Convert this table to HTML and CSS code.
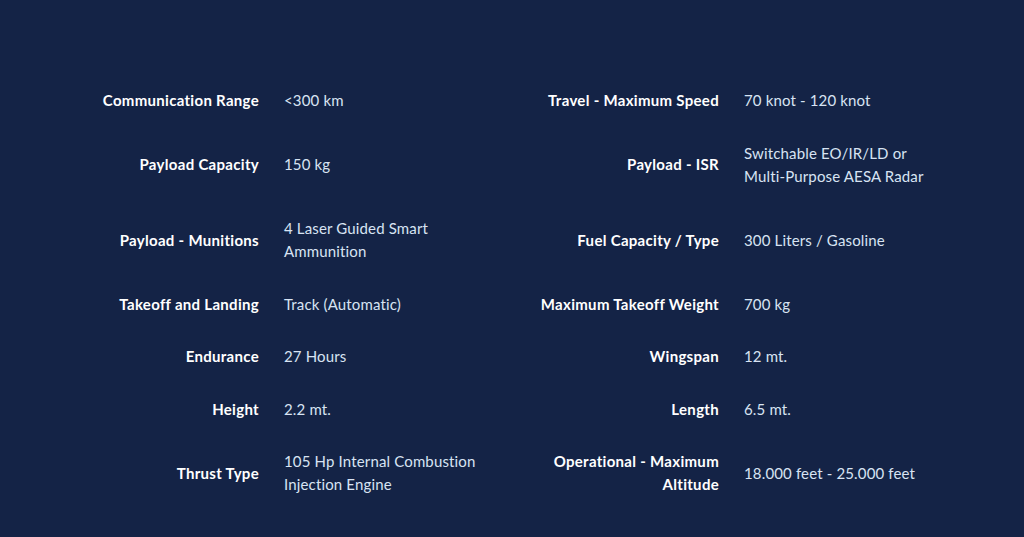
FILE: index.html
```html
<!DOCTYPE html>
<html lang="en">
<head>
<meta charset="utf-8">
<title>Specifications</title>
<link rel="stylesheet" href="styles.css">
</head>
<body>
<section class="specs">
  <div class="spec"><div class="label">Communication Range</div><div class="value">&lt;300 km</div></div>
  <div class="spec"><div class="label">Travel - Maximum Speed</div><div class="value">70 knot - 120 knot</div></div>
  <div class="spec"><div class="label">Payload Capacity</div><div class="value">150 kg</div></div>
  <div class="spec"><div class="label">Payload - ISR</div><div class="value">Switchable EO/IR/LD or Multi&#8209;Purpose AESA Radar</div></div>
  <div class="spec"><div class="label">Payload - Munitions</div><div class="value">4 Laser Guided Smart Ammunition</div></div>
  <div class="spec"><div class="label">Fuel Capacity / Type</div><div class="value">300 Liters / Gasoline</div></div>
  <div class="spec"><div class="label">Takeoff and Landing</div><div class="value">Track (Automatic)</div></div>
  <div class="spec"><div class="label">Maximum Takeoff Weight</div><div class="value">700 kg</div></div>
  <div class="spec"><div class="label">Endurance</div><div class="value">27 Hours</div></div>
  <div class="spec"><div class="label">Wingspan</div><div class="value">12 mt.</div></div>
  <div class="spec"><div class="label">Height</div><div class="value">2.2 mt.</div></div>
  <div class="spec"><div class="label">Length</div><div class="value">6.5 mt.</div></div>
  <div class="spec"><div class="label">Thrust Type</div><div class="value">105 Hp Internal Combustion Injection Engine</div></div>
  <div class="spec"><div class="label">Operational - Maximum Altitude</div><div class="value">18.000 feet - 25.000 feet</div></div>
</section>
</body>
</html>
```
FILE: styles.css
```css
html, body {
  margin: 0;
  padding: 0;
  background: #142346;
}
body {
  min-height: 537px;
  font-family: Lato, "Open Sans", sans-serif;
  font-size: 15px;
  line-height: 23px;
}
.specs {
  width: 920px;
  margin: 0 auto;
  padding-top: 89px;
  display: grid;
  grid-template-columns: 460px 460px;
  row-gap: 29.5px;
}
.spec {
  display: flex;
  align-items: center;
  gap: 25px;
}
.label {
  flex: 0 0 207px;
  text-align: right;
  font-weight: 700;
  letter-spacing: 0.3px;
  color: #ffffff;
}
.value {
  flex: 0 0 200px;
  letter-spacing: 0.15px;
  color: #d8e3f3;
}
```
